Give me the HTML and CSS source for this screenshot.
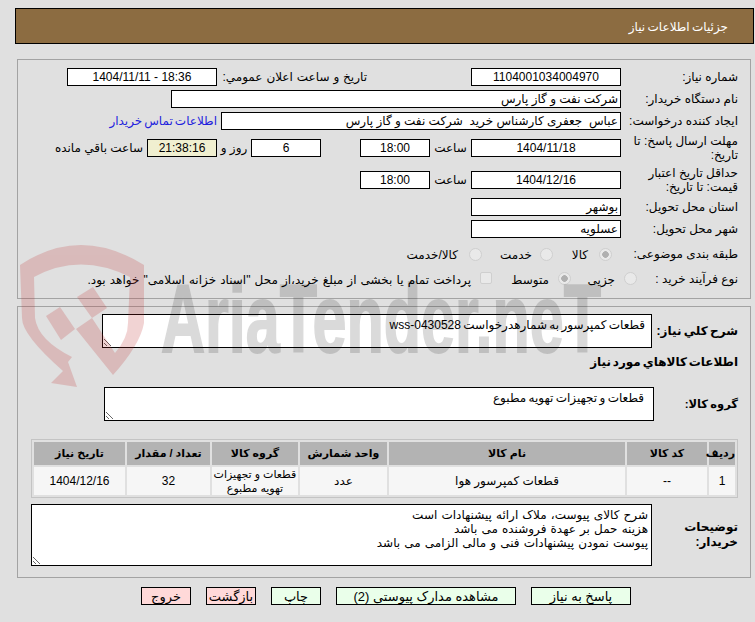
FILE: index.html
```html
<!DOCTYPE html>
<html lang="fa" dir="rtl">
<head>
<meta charset="utf-8">
<title>جزئیات اطلاعات نیاز</title>
<link rel="stylesheet" href="styles.css">
</head>
<body>
<div class="page">
  <header class="title-bar">جزئیات اطلاعات نیاز</header>

  <section class="panel panel-info">
    <div class="row">
      <div class="label">شماره نیاز:</div>
      <div class="field center w150">1104001034004970</div>
      <div class="label label-public">تاریخ و ساعت اعلان عمومي:</div>
      <div class="field center w150 ltr">1404/11/11 - 18:36</div>
    </div>
    <div class="row">
      <div class="label">نام دستگاه خریدار:</div>
      <div class="field w450">شرکت نفت و گاز پارس</div>
    </div>
    <div class="row">
      <div class="label">ایجاد کننده درخواست:</div>
      <div class="field w400">عباس  جعفری کارشناس خرید  شرکت نفت و گاز پارس</div>
      <a class="contact" href="#">اطلاعات تماس خریدار</a>
    </div>
    <div class="row tall">
      <div class="label">مهلت ارسال پاسخ: تا تاریخ:</div>
      <div class="field center w150">1404/11/18</div>
      <span class="inline-text hour">ساعت</span>
      <div class="field center w70">18:00</div>
      <div class="field center w70 day">6</div>
      <span class="inline-text day-text">روز و</span>
      <div class="field center w70 remain">21:38:16</div>
      <span class="inline-text">ساعت باقي مانده</span>
    </div>
    <div class="row tall">
      <div class="label">حداقل تاریخ اعتبار قیمت: تا تاریخ:</div>
      <div class="field center w150">1404/12/16</div>
      <span class="inline-text hour">ساعت</span>
      <div class="field center w70">18:00</div>
    </div>
    <div class="row">
      <div class="label">استان محل تحویل:</div>
      <div class="field w150">بوشهر</div>
    </div>
    <div class="row">
      <div class="label">شهر محل تحویل:</div>
      <div class="field w150">عسلویه</div>
    </div>
    <div class="row options-a">
      <div class="label">طبقه بندی موضوعی:</div>
      <input class="radio r-kala" type="radio" name="cat" checked disabled>
      <span class="opt t-kala">کالا</span>
      <input class="radio" type="radio" name="cat" disabled>
      <span class="opt t-service">خدمت</span>
      <input class="radio" type="radio" name="cat" disabled>
      <span class="opt t-both">کالا/خدمت</span>
    </div>
    <div class="row options-b">
      <div class="label">نوع فرآیند خرید :</div>
      <input class="radio" type="radio" name="kind" disabled>
      <span class="opt t-small">جزیی</span>
      <input class="radio" type="radio" name="kind" checked disabled>
      <span class="opt t-mid">متوسط</span>
      <input class="check" type="checkbox" disabled>
      <span class="opt t-pay">پرداخت تمام یا بخشی از مبلغ خرید،از محل "اسناد خزانه اسلامی" خواهد بود.</span>
    </div>
  </section>

  <section class="panel panel-detail">
    <div class="row-area summary">
      <div class="label-bold lw86">شرح کلي نياز:</div>
      <textarea class="area a550" readonly>قطعات کمپرسور به شمارهدرخواست wss-0430528</textarea>
    </div>
    <h2 class="section-title">اطلاعات کالاهاي مورد نياز</h2>
    <div class="row-area group">
      <div class="label-bold lw84">گروه کالا:</div>
      <textarea class="area a550 group-area" readonly>قطعات و تجهیزات تهویه مطبوع</textarea>
    </div>
    <table class="goods">
      <thead>
        <tr>
          <th class="c-row">ردیف</th>
          <th class="c-code">کد کالا</th>
          <th class="c-name">نام کالا</th>
          <th class="c-unit">واحد شمارش</th>
          <th class="c-group">گروه کالا</th>
          <th class="c-qty">تعداد / مقدار</th>
          <th class="c-date">تاریخ نیاز</th>
        </tr>
      </thead>
      <tbody>
        <tr>
          <td>1</td>
          <td>--</td>
          <td>قطعات کمپرسور هوا</td>
          <td>عدد</td>
          <td class="cell-two">قطعات و تجهیزات<br>تهویه مطبوع</td>
          <td>32</td>
          <td>1404/12/16</td>
        </tr>
      </tbody>
    </table>
    <div class="row-area notes">
      <div class="label-bold lw86">توضیحات خریدار:</div>
      <textarea class="area a621 notes-area" readonly>شرح کالای پیوست، ملاک ارائه پیشنهادات است
هزینه حمل بر عهدة فروشنده می باشد
پیوست نمودن پیشنهادات فنی و مالی الزامی می باشد</textarea>
    </div>
  </section>

  <div class="actions">
    <button class="btn ok b100" type="button">پاسخ به نیاز</button>
    <button class="btn ok b180" type="button">مشاهده مدارک پیوستی (2)</button>
    <button class="btn ok b50" type="button">چاپ</button>
    <button class="btn no b50" type="button">بازگشت</button>
    <button class="btn no b50" type="button">خروج</button>
  </div>
</div>

<svg class="watermark" viewBox="0 0 755 622" aria-hidden="true">
  <g class="wm-red">
    <path fill-rule="evenodd" d="M20 265 Q80 225 144 265 L144 323 Q140 345 113 375 L76 329 L92 318 L115 353 Q128 338 128 323 L130 277 Q80 252 34 277 L35 318 Q38 340 72 357 L68 362 L77 387 L51 383 L63 371 Q22 335 22 318 Z"/>
    <path d="M46 316 L60 307 L75 329 L61 340 Z"/>
    <path d="M77 297 L93 287 L107 308 L92 318 Z"/>
  </g>
  <text class="wm-text" x="161" y="352" textLength="440" lengthAdjust="spacingAndGlyphs" direction="ltr">AriaTender.neT</text>
</svg>
</body>
</html>
```

FILE: styles.css
```css
* { box-sizing: border-box; }
html, body { margin: 0; padding: 0; height: 622px; overflow: hidden; }
body {
  position: relative;
  background: #e0e0e0;
  color: #000;
  font-family: "Liberation Sans", "DejaVu Sans", sans-serif;
  font-size: 12px;
}
.page { padding: 8px 1px 0 15px; }
.title-bar {
  height: 36px;
  line-height: 36px;
  padding-right: 25px;
  background: #8c6c41;
  border: 1px solid #000;
  color: #fff;
  word-spacing: -1px;
}
.panel {
  margin: 0 3px 0 2px;
  border: 1px solid #a3a3a3;
}
.panel-info { height: 240px; margin-top: 15px; padding: 8px 12px 0 0; }
.panel-detail { height: 272px; margin-top: 7px; padding: 7px 12px 0 13px; }

.row { display: flex; align-items: center; height: 18px; margin-bottom: 4px; }
.row.tall { height: 28px; }
.label { width: 117px; flex: none; line-height: 14px; }
.label-public { width: 145px; margin-right: 104px; margin-left: 5px; word-spacing: .6px; }
.field {
  height: 18px;
  line-height: 16px;
  flex: none;
  padding: 0 2px;
  background: #fff;
  border: 1px solid #000;
  white-space: pre;
}
.center { text-align: center; }
.ltr { direction: ltr; }
.w150 { width: 150px; }
.w450 { width: 450px; }
.w400 { width: 400px; }
.w70 { width: 70px; }
.contact { margin-right: 4px; color: #2222dd; text-decoration: none; white-space: nowrap; word-spacing: -1.3px; }
.inline-text { flex: none; white-space: nowrap; }
.hour { width: 41px; text-align: center; }
.day { margin-right: 39px; }
.day-text { width: 34px; text-align: center; }
.remain { background: #f0efd0; margin-left: 4px; }

.options-a, .options-b { height: 24px; margin-bottom: 0; }
.radio, .check {
  appearance: none;
  flex: none;
  width: 13px;
  height: 13px;
  margin: 0;
  background: #e9e9e9;
  border: 1px solid #cfcfcf;
}
.radio { border-radius: 50%; }
.radio:checked { background: radial-gradient(circle, #b0b0b0 0 3px, #e9e9e9 3.6px); }
.check { width: 12px; height: 12px; border-radius: 2px; margin-top: -2px; }
.opt { flex: none; white-space: nowrap; margin-top: 2px; }
.r-kala { margin-right: 9px; }
.t-kala { width: 15px; margin-right: 11px; margin-left: 20px; }
.t-service { width: 32px; margin-right: 8px; margin-left: 18px; }
.t-both { margin-right: 11px; word-spacing: 1px; }
.options-b .label { width: 101px; }
.options-b { padding-top: 1px; }
.t-small { width: 29px; margin-right: 9px; margin-left: 15px; }
.t-mid { width: 36px; margin-right: 9px; margin-left: 21px; }
.t-pay { margin-right: 9px; word-spacing: .8px; }

.row-area { display: flex; align-items: center; }
.label-bold { flex: none; font-weight: bold; font-size: 12px; line-height: 15px; }
.summary .label-bold { white-space: nowrap; word-spacing: -1px; }
.group .label-bold { white-space: nowrap; font-size: 11.5px; word-spacing: -1px; }
.lw86 { width: 86px; }
.lw84 { width: 84px; }
.area {
  display: block;
  flex: none;
  height: 34px;
  padding: 3px 6px;
  background: #fff;
  border: 1px solid #000;
  border-radius: 0;
  outline: 0;
  font: inherit;
  color: inherit;
  word-spacing: -1px;
  resize: both;
  overflow: hidden;
}
.a550 { width: 550px; }
.a621 { width: 621px; height: 62px; line-height: 14px; padding: 3px; word-spacing: .8px; }
.section-title { margin: 7px 0 17px; font-size: 12px; line-height: 15px; font-weight: bold; word-spacing: -1.5px; }
.group-area { padding-right: 9px; }
.goods {
  width: 707px;
  margin-top: 18px;
  table-layout: fixed;
  border-collapse: separate;
  border-spacing: 2px;
  border: 1px solid #c4c4c4;
  text-align: center;
}
.goods th { height: 23px; padding: 0; background: #b3b3b3; font-size: 11px; font-weight: bold; }
.goods td { height: 28px; padding: 0; background: #f6f6f6; line-height: 14px; }
.goods .cell-two { white-space: nowrap; font-size: 11px; }
.c-row { width: 26px; }
.c-code { width: 80px; }
.c-name { width: 236px; }
.c-unit { width: 87px; }
.c-group { width: 86px; }
.c-qty { width: 83px; }
.c-date { width: 91px; }
.notes { margin-top: 6px; }

.actions { display: flex; gap: 15px; margin-top: 9px; padding-right: 123px; }
.btn {
  height: 18px;
  padding: 0;
  border: 1px solid #000;
  font: inherit;
  font-size: 13px;
  color: #000;
}
.ok { background: #eaffea; }
.no { background: #ffd9d9; }
.b100 { width: 100px; }
.b180 { width: 180px; }
.b50 { width: 50px; }

.watermark {
  position: absolute;
  left: 0;
  top: 0;
  width: 755px;
  height: 622px;
  pointer-events: none;
}
.wm-red { fill: #be2828; opacity: .2; }
.wm-text {
  font-family: "Liberation Sans", sans-serif;
  font-size: 96px;
  font-weight: bold;
  fill: #000;
  stroke: #000;
  stroke-width: 2px;
  opacity: .14;
}
```
